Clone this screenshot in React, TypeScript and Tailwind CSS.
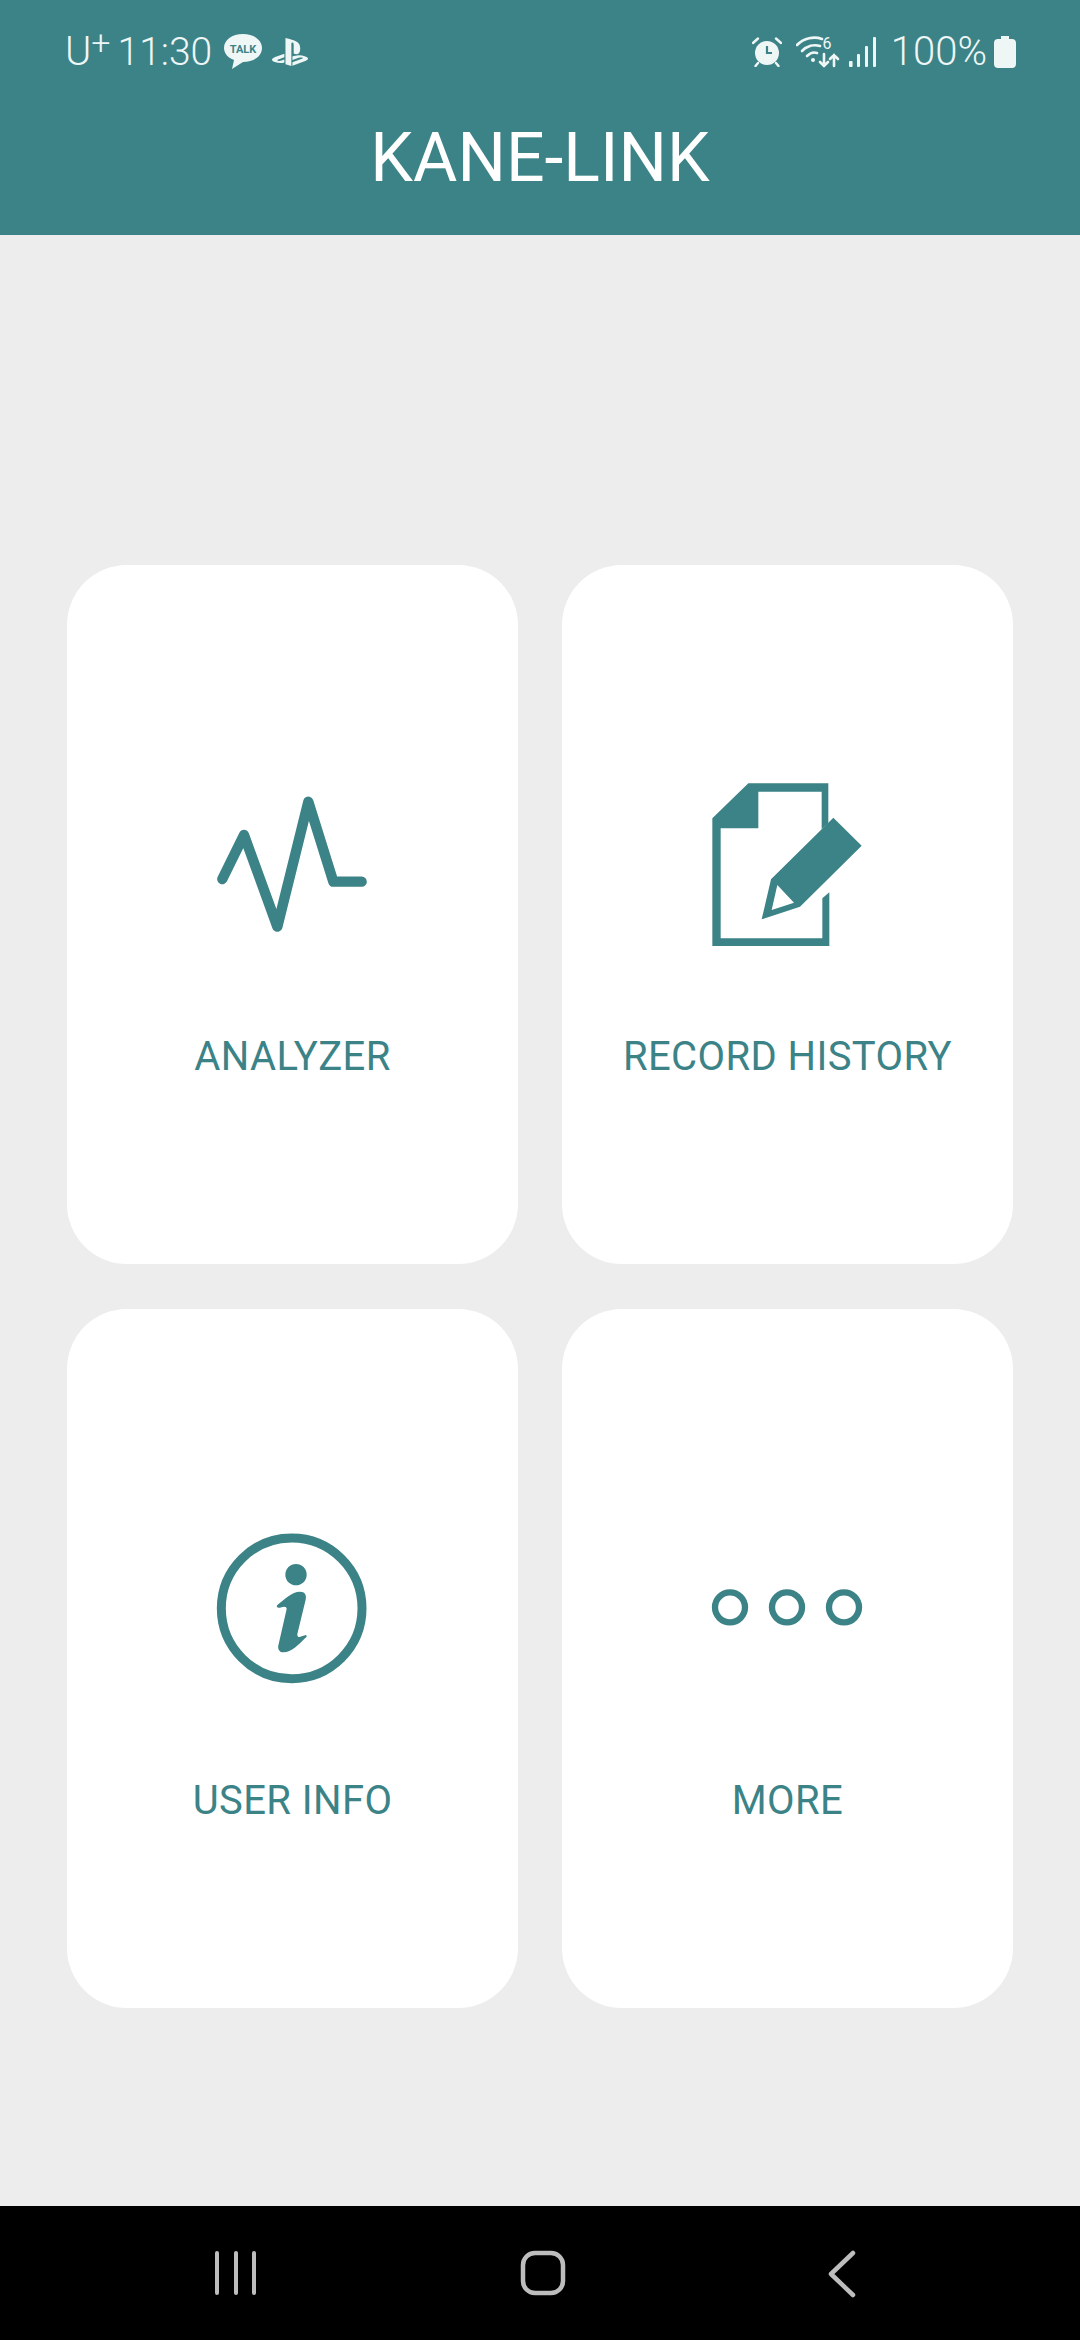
import { ReactNode } from 'react';
import { SiPlaystation } from 'react-icons/si';

const TEAL = '#3c8387';

const AnalyzerIcon = () => (
  <svg viewBox="0 0 615 540" className="w-[205px] h-[180px]">
    <path
      d="M97 327 L162 195 L262 470 L355 95 L430 335 L515 335"
      fill="none"
      stroke={TEAL}
      strokeWidth="31"
      strokeLinecap="round"
      strokeLinejoin="round"
    />
  </svg>
);

const RecordIcon = () => (
  <svg viewBox="-15 0 615 540" className="w-[205px] h-[180px]">
    <path
      d="M175 40 H415 V160 L395 178 V65 H205 V175 H92 V505 H397 V385 L418 367 V528 H67 V145 Z"
      fill={TEAL}
    />
    <path
      fillRule="evenodd"
      d="M430 143 L515 227 L330 410 L215 448 L243 328 Z M262 345 L312 398 L245 420 Z"
      fill={TEAL}
    />
  </svg>
);

const InfoIcon = () => (
  <svg viewBox="-30 -15 615 540" className="w-[205px] h-[180px]">
    <circle cx="275" cy="268" r="211" fill="none" stroke={TEAL} strokeWidth="27" />
    <circle cx="288" cy="167" r="32" fill={TEAL} />
    <path
      d="M232 258 C255 240 275 218 300 218 C315 218 320 228 317 242 L292 345 C291 355 298 356 305 352 L318 348 C322 350 320 355 315 358 C295 378 275 400 250 400 C236 400 232 388 236 375 L260 270 C260 262 252 262 240 266 C232 268 228 263 232 258 Z"
      fill={TEAL}
    />
  </svg>
);

const MoreIcon = () => (
  <svg viewBox="-15 -165 615 540" className="w-[205px] h-[180px]">
    <circle cx="120" cy="115" r="45" fill="none" stroke={TEAL} strokeWidth="19" />
    <circle cx="291" cy="115" r="45" fill="none" stroke={TEAL} strokeWidth="19" />
    <circle cx="462" cy="115" r="45" fill="none" stroke={TEAL} strokeWidth="19" />
  </svg>
);

const TalkBubble = () => (
  <svg viewBox="0 0 38 36" className="w-[38px] h-[36px] ml-[12px]">
    <path d="M19 0 C30 0 38 6 38 14 C38 22 30 28 19 28 L8 35 L10 26 C4 24 0 19 0 14 C0 6 8 0 19 0 Z" fill="#eef6f6" />
    <text x="19" y="18.5" textAnchor="middle" fontSize="11" fontWeight="700" fill={TEAL} fontFamily="Roboto, sans-serif">
      TALK
    </text>
  </svg>
);

const AlarmIcon = () => (
  <svg viewBox="0 0 30 30" className="w-[30px] h-[30px]">
    <circle cx="15" cy="16" r="12" fill="#eef6f6" />
    <path d="M1 6 L6 1.5 M29 6 L24 1.5 M6 26 L3.5 29 M24 26 L26.5 29" stroke="#eef6f6" strokeWidth="2.4" strokeLinecap="round" />
    <path d="M15 9 V16 H20" fill="none" stroke={TEAL} strokeWidth="2.2" />
  </svg>
);

const WifiIcon = () => (
  <svg viewBox="0 0 44 34" className="w-[44px] h-[34px] ml-[14px]">
    <g fill="none" stroke="#eef6f6" strokeWidth="2.6" strokeLinecap="round">
      <path d="M1 10 C8 3 18 1 26 4" />
      <path d="M6 16 C11 11 18 9 24 11" />
      <path d="M11 21 C14 18 18 17 21 18" />
      <path d="M28 19 V31 M24 27 L28 31 L32 27" />
      <path d="M38 31 V20 M34 24 L38 20 L42 24" />
    </g>
    <circle cx="17" cy="25" r="2" fill="#eef6f6" />
    <text x="31" y="14" textAnchor="middle" fontSize="16" fill="#eef6f6" fontFamily="Roboto, sans-serif">6</text>
  </svg>
);

const SignalIcon = () => (
  <svg viewBox="0 0 28 30" className="w-[28px] h-[30px] ml-[9px]">
    <g fill="#eef6f6">
      <rect x="0" y="24" width="3.6" height="6" rx="1" />
      <rect x="8" y="17" width="3" height="13" rx="1" />
      <rect x="16" y="9" width="3" height="21" rx="1" />
      <rect x="24" y="0" width="3" height="30" rx="1" />
    </g>
  </svg>
);

const BatteryIcon = () => (
  <svg viewBox="0 0 22 32" className="w-[22px] h-[32px] ml-[7px]">
    <path d="M7 0 H15 V3 H18 C20.5 3 22 4.5 22 7 V28 C22 30.5 20.5 32 18 32 H4 C1.5 32 0 30.5 0 28 V7 C0 4.5 1.5 3 4 3 H7 Z" fill="#eef6f6" />
  </svg>
);

const MenuCard = ({ icon, label }: { icon: ReactNode; label: string }) => (
  <div className="bg-white rounded-[60px] h-[699px] flex flex-col items-center pt-[205px]">
    {icon}
    <div className="mt-[85px] text-[40px] leading-[44px] tracking-[0.4px] text-[#3c8387]">{label}</div>
  </div>
);

export default function App() {
  return (
    <div className="w-[1080px] h-[2340px] flex flex-col bg-[#ededed] font-['Roboto',sans-serif] overflow-hidden">
      <header className="h-[235px] bg-[#3c8387] flex flex-col shrink-0">
        <div className="flex items-center justify-between pl-[65px] pr-[64px] pt-[30px] h-[74px] text-[#eef6f6]">
          <div className="flex items-center">
            <span className="text-[40px] leading-[44px] font-light">U</span>
            <span className="text-[34px] leading-[30px] font-light self-start -mt-[3px]">+</span>
            <span className="text-[39px] leading-[44px] font-light ml-[7px]">11:30</span>
            <TalkBubble />
            <SiPlaystation className="w-[36px] h-[36px] ml-[10px]" />
          </div>
          <div className="flex items-center">
            <AlarmIcon />
            <WifiIcon />
            <SignalIcon />
            <span className="text-[40px] leading-[44px] font-light ml-[14px]">100%</span>
            <BatteryIcon />
          </div>
        </div>
        <h1 className="mt-[34px] text-center text-[68px] leading-[100px] font-normal text-white">KANE-LINK</h1>
      </header>

      <main className="flex-1 px-[67px] pt-[330px]">
        <div className="grid grid-cols-2 gap-x-[44px] gap-y-[45px]">
          <MenuCard icon={<AnalyzerIcon />} label="ANALYZER" />
          <MenuCard icon={<RecordIcon />} label="RECORD HISTORY" />
          <MenuCard icon={<InfoIcon />} label="USER INFO" />
          <MenuCard icon={<MoreIcon />} label="MORE" />
        </div>
      </main>

      <nav className="h-[134px] bg-black shrink-0 flex items-start justify-between pl-[214px] pr-[224px] pt-[44px]">
        <svg viewBox="0 0 44 46" className="w-[44px] h-[46px]">
          <path d="M3 3 V43 M22 3 V43 M40 3 V43" stroke="#bdbdbd" strokeWidth="4" strokeLinecap="round" />
        </svg>
        <svg viewBox="0 0 46 46" className="w-[46px] h-[46px]">
          <rect x="3" y="3" width="40" height="40" rx="12" fill="none" stroke="#bdbdbd" strokeWidth="4.5" />
        </svg>
        <svg viewBox="0 0 28 48" className="w-[28px] h-[48px]">
          <path d="M25 3 L3 24 L25 45" fill="none" stroke="#bdbdbd" strokeWidth="4.5" strokeLinecap="round" strokeLinejoin="round" />
        </svg>
      </nav>
    </div>
  );
}
